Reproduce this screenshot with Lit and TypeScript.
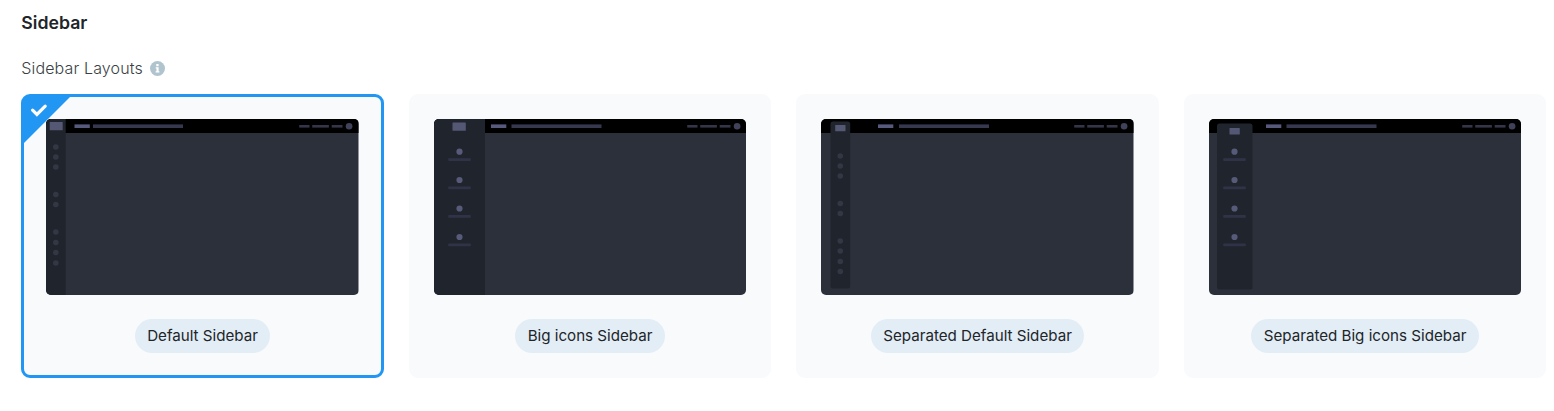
import { LitElement, html, svg, css } from "lit";
import { customElement, property } from "lit/decorators.js";

interface Layout {
  label: string;
  side: { x: number; y: number; w: number; h: number; r: number };
  logo: { x: number; y: number; w: number; h: number };
  big: boolean;
  itemX: number;
  items: number[];
  titleX: number;
  searchX: number;
}

const BIG_ITEMS = [32.7, 61, 89.5, 118];

const LAYOUTS: Layout[] = [
  {
    label: "Default Sidebar",
    side: { x: 0, y: 0, w: 19.7, h: 176, r: 0 },
    logo: { x: 3.7, y: 3, w: 13, h: 8.3 },
    big: false,
    itemX: 9.8,
    items: [28, 38, 48, 75.5, 85.5, 113, 123.5, 133.5, 144],
    titleX: 28.5,
    searchX: 47,
  },
  {
    label: "Big icons Sidebar",
    side: { x: 0, y: 0, w: 51, h: 176, r: 0 },
    logo: { x: 18.5, y: 3.5, w: 13.3, h: 8.3 },
    big: true,
    itemX: 25.5,
    items: BIG_ITEMS,
    titleX: 57,
    searchX: 77.5,
  },
  {
    label: "Separated Default Sidebar",
    side: { x: 9.5, y: 2.5, w: 19.7, h: 167, r: 2.5 },
    logo: { x: 14.2, y: 6, w: 10.3, h: 6.3 },
    big: false,
    itemX: 19.3,
    items: [37, 47, 57, 84.5, 94.5, 122, 132, 142.5, 152.5],
    titleX: 57,
    searchX: 78,
  },
  {
    label: "Separated Big icons Sidebar",
    side: { x: 8, y: 4.5, w: 35.5, h: 166, r: 2.5 },
    logo: { x: 20.5, y: 9, w: 10.3, h: 6.5 },
    big: true,
    itemX: 25.5,
    items: BIG_ITEMS,
    titleX: 57,
    searchX: 77.5,
  },
];

@customElement("layout-card")
export class LayoutCard extends LitElement {
  @property({ attribute: false }) layout!: Layout;
  @property({ type: Boolean, reflect: true }) selected = false;

  static styles = css`
    :host {
      position: relative;
      display: flex;
      flex-direction: column;
      align-items: center;
      gap: 24px;
      box-sizing: border-box;
      padding: 22px;
      border: 3px solid #f8fafc;
      border-radius: 9px;
      background: #f8fafc;
      background-clip: padding-box;
      height: 284px;
    }
    :host([selected]) {
      border-color: #2196f3;
    }
    .thumb {
      display: block;
      width: 100%;
      height: 176px;
      border-radius: 5px;
    }
    .corner {
      position: absolute;
      top: 0;
      left: 0;
      width: 46px;
      height: 46px;
    }
    .label {
      height: 34px;
      box-sizing: border-box;
      padding: 0 12.5px;
      border-radius: 17px;
      background: #e3edf6;
      color: #212529;
      font-size: 15.15px;
      line-height: 34px;
      white-space: nowrap;
    }
  `;

  render() {
    const l = this.layout;
    return html`
      ${this.selected
        ? html`<svg class="corner" viewBox="0 0 46 46">
            <path d="M0 0H46L0 46Z" fill="#2196f3" />
            <path d="M8.6 13.2L12.9 17.4L21.2 9.1" fill="none" stroke="#fff" stroke-width="3.2" stroke-linecap="round" />
          </svg>`
        : null}
      <svg class="thumb" viewBox="0 0 312.5 176" preserveAspectRatio="none">
        <rect width="312.5" height="176" fill="#2c303a" />
        <rect width="312.5" height="14" fill="#000" />
        <rect x=${l.side.x} y=${l.side.y} width=${l.side.w} height=${l.side.h} rx=${l.side.r} fill="#20242c" />
        <rect x=${l.logo.x} y=${l.logo.y} width=${l.logo.w} height=${l.logo.h} rx="0.6" fill="#545874" />
        <rect x=${l.titleX} y="5.4" width="15.3" height="3.6" fill="#575a7c" />
        <rect x=${l.searchX} y="5.4" width="90" height="3.6" fill="#35384f" />
        <g fill="#343548">
          <rect x="253.2" y="6" width="10.3" height="2.6" />
          <rect x="266.2" y="6" width="16.7" height="2.6" />
          <rect x="285.7" y="6" width="10.8" height="2.6" />
          <circle cx="303.1" cy="7.2" r="3.3" fill="#40415a" />
        </g>
        ${l.items.map((y) =>
          l.big
            ? svg`<circle cx=${l.itemX} cy=${y} r="3.1" fill="#575a78" />
                <rect x=${l.itemX - 11.3} y=${y + 6.6} width="22.6" height="2.6" rx="0.8" fill="#303348" />`
            : svg`<circle cx=${l.itemX} cy=${y} r="2.8" fill="#333743" />`
        )}
      </svg>
      <div class="label">${l.label}</div>
    `;
  }
}

@customElement("app-root")
export class AppRoot extends LitElement {
  static styles = css`
    :host {
      display: block;
      box-sizing: border-box;
      height: 411px;
      padding: 11px 0 0 21.3px;
      background: #fff;
      color: #212529;
      font-family: Inter, sans-serif;
    }
    .title {
      margin: 0;
      height: 24px;
      font-size: 17.7px;
      line-height: 24px;
      font-weight: 600;
    }
    .caption {
      display: flex;
      align-items: center;
      gap: 7px;
      height: 24px;
      margin: 21px 0 14px;
      color: #3a3f45;
      font-size: 16px;
      font-weight: 300;
      letter-spacing: 0.14px;
    }
    .info {
      width: 15px;
      height: 15px;
    }
    .grid {
      display: grid;
      grid-template-columns: repeat(4, 362.5px);
      gap: 25px;
    }
  `;

  render() {
    return html`
      <h2 class="title">Sidebar</h2>
      <div class="caption">
        <span>Sidebar Layouts</span>
        <svg class="info" viewBox="0 0 15 15">
          <circle cx="7.5" cy="7.5" r="7.5" fill="#b0c4ce" />
          <path d="M6.3 3.1h2.3v2.1H6.3zM5.7 6.2h2.9v4h.8v1.3H5.6v-1.3h.9V7.5h-.8z" fill="#fff" />
        </svg>
      </div>
      <div class="grid">
        ${LAYOUTS.map((l, i) => html`<layout-card .layout=${l} ?selected=${i === 0}></layout-card>`)}
      </div>
    `;
  }
}
